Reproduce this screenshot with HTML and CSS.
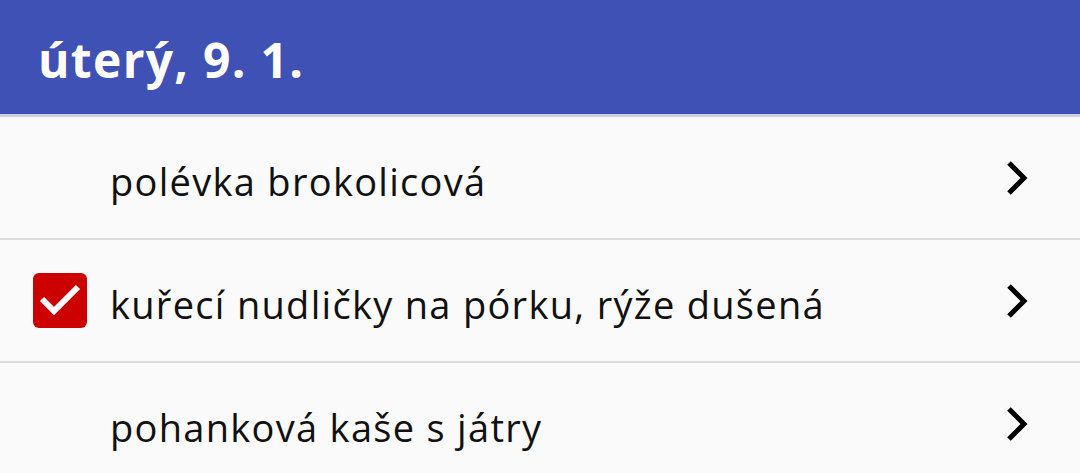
FILE: index.html
```html
<!DOCTYPE html>
<html lang="cs">
<head>
    <meta charset="UTF-8">
    <title>Jídelníček</title>
    <link rel="stylesheet" href="styles.css">
</head>
<body>
    <header class="day-header">
        <h1>úterý, 9. 1.</h1>
    </header>

    <main class="menu">
        <div class="menu-row">
            <span class="check"></span>
            <span class="meal">polévka brokolicová</span>
            <svg class="chevron" viewBox="0 0 22 36"><path d="M3 3 L18 18 L3 33" /></svg>
        </div>
        <div class="menu-row">
            <span class="check checked">
                <svg viewBox="0 0 54 54"><path d="M9 26 L21 38 L45 14" /></svg>
            </span>
            <span class="meal">kuřecí nudličky na pórku, rýže dušená</span>
            <svg class="chevron" viewBox="0 0 22 36"><path d="M3 3 L18 18 L3 33" /></svg>
        </div>
        <div class="menu-row">
            <span class="check"></span>
            <span class="meal">pohanková kaše s játry</span>
            <svg class="chevron" viewBox="0 0 22 36"><path d="M3 3 L18 18 L3 33" /></svg>
        </div>
    </main>
</body>
</html>
```

FILE: styles.css
```css
body {
    margin: 0;
    padding: 0;
    font-family: "Open Sans", "Noto Sans", sans-serif;
    background-color: #fafafa;
    color: #111;
}

.day-header {
    background-color: #3f51b5;
    height: 114px;
    border-bottom: 3px solid #cfd1e3;
    display: flex;
    align-items: center;
    padding: 0 38px;
}

.day-header h1 {
    margin: 0;
    color: #fff;
    font-size: 48px;
    font-weight: bold;
    letter-spacing: 1.3px;
    padding-top: 4px;
}

.menu-row {
    display: flex;
    align-items: center;
    height: 121px;
    border-bottom: 2px solid #dcdcdc;
    padding: 0 52px 0 33px;
}

.menu-row:last-child {
    border-bottom: none;
}

.check {
    width: 54px;
    height: 55px;
    margin-right: 23px;
    flex-shrink: 0;
    border-radius: 6px;
}

.check.checked {
    background-color: #cc0000;
}

.check svg {
    width: 54px;
    height: 54px;
    display: block;
}

.check svg path {
    fill: none;
    stroke: #fff;
    stroke-width: 6;
}

.meal {
    flex: 1;
    font-size: 38px;
    letter-spacing: 1.3px;
    padding-top: 6px;
}

.chevron {
    width: 22px;
    height: 36px;
}

.chevron path {
    fill: none;
    stroke: #000;
    stroke-width: 5;
}
```
